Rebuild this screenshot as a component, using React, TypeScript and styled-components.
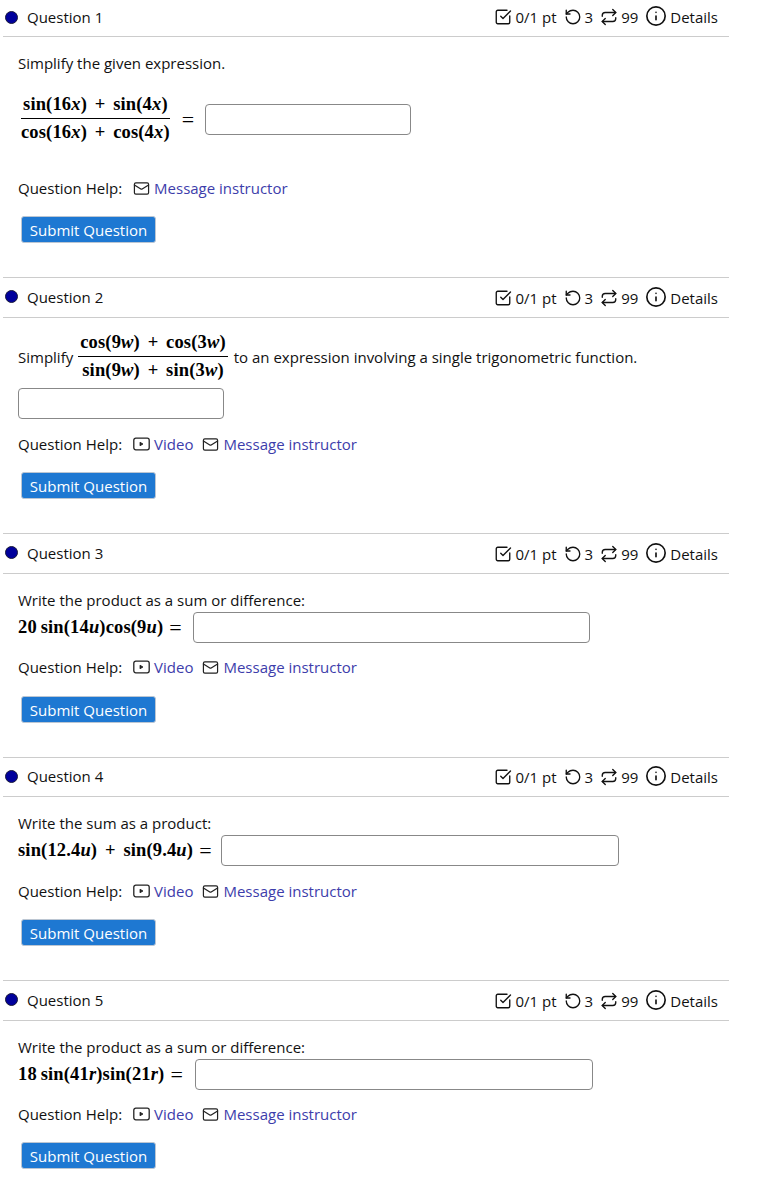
import * as React from 'react';
import styled, { createGlobalStyle } from 'styled-components';
import { Info, Mail, Repeat, RotateCcw, SquareCheckBig } from 'lucide-react';

const GlobalStyle = createGlobalStyle`
  html, body {
    margin: 0;
    padding: 0;
    background: #fff;
  }
  body {
    font-family: "Open Sans", "Liberation Sans", sans-serif;
    font-size: 15px;
    color: #111;
  }
`;

const Page = styled.div`
  width: 726px;
  margin-left: 3px;
`;

const Question = styled.section<{ $first?: boolean }>`
  border-top: ${(p) => (p.$first ? 'none' : '1px solid #ccc')};
`;

const Header = styled.header<{ $h: number }>`
  height: ${(p) => p.$h}px;
  box-sizing: content-box;
  border-bottom: 1px solid #ccc;
  display: flex;
  align-items: center;
  justify-content: space-between;
  padding-right: 11px;
`;

const Title = styled.div`
  display: flex;
  align-items: center;
  gap: 9px;
  font-size: 15px;
  margin-bottom: 2px;
`;

const Dot = styled.span`
  width: 13px;
  height: 13px;
  margin-left: 2px;
  border-radius: 50%;
  background: #00009c;
  border: 1px solid #1a1a3a;
  box-sizing: border-box;
`;

const Meta = styled.div<{ $first?: boolean }>`
  display: flex;
  align-items: center;
  font-size: 15px;
  gap: 7px;
  margin-top: ${(p) => (p.$first ? '-2px' : '0')};
`;

const MetaItem = styled.span`
  display: inline-flex;
  align-items: center;
  gap: 3px;
`;

const DetailsItem = styled(MetaItem)`
  svg {
    position: relative;
    top: -1px;
  }
`;

const Body = styled.div`
  padding-left: 15px;
`;

const Prompt = styled.div`
  line-height: 20px;
  white-space: nowrap;
`;

const MathRow = styled.div<{ $gap?: number }>`
  display: flex;
  align-items: center;
  margin-top: ${(p) => p.$gap ?? 0}px;
`;

const MathText = styled.span`
  font-family: "Liberation Serif", "DejaVu Serif", serif;
  font-weight: bold;
  font-size: 18.5px;
  letter-spacing: 0.15px;
  word-spacing: 3px;
  white-space: nowrap;
  color: #000;
`;

const Fraction = styled.span<{ $left: number; $right: number; $bottom?: number }>`
  display: inline-flex;
  flex-direction: column;
  align-items: center;
  line-height: 27px;
  margin: 0 ${(p) => p.$right}px ${(p) => p.$bottom ?? 0}px ${(p) => p.$left}px;
`;

const Numerator = styled(MathText)`
  display: block;
  padding: 0 2px;
  border-bottom: 1.5px solid #000;
`;

const Equals = styled(MathText)<{ $left: number; $right: number }>`
  font-weight: normal;
  font-size: 22px;
  margin: 0 ${(p) => p.$right}px 0 ${(p) => p.$left}px;
`;

const Answer = styled.input<{ $w: number }>`
  display: block;
  width: ${(p) => p.$w}px;
  height: 31px;
  box-sizing: border-box;
  border: 1px solid #888;
  border-radius: 4px;
  background: #fff;
  padding: 0;
  outline: none;
`;

const LooseAnswer = styled(Answer)`
  margin-top: 4px;
`;

const Help = styled.div<{ $gap: number }>`
  display: flex;
  align-items: center;
  height: 20px;
  font-size: 15px;
  margin-top: ${(p) => p.$gap}px;
`;

const HelpLabel = styled.span`
  margin-right: 11px;
`;

const HelpLink = styled.a`
  display: inline-flex;
  align-items: center;
  gap: 4px;
  margin-right: 9px;
  color: #3d3dab;
  text-decoration: none;

  svg {
    color: #222;
  }
`;

const Submit = styled.button<{ $gap: number }>`
  display: block;
  margin: ${(p) => p.$gap}px 0 0 3px;
  width: 135px;
  height: 27px;
  padding: 0;
  border: 1px solid #bcc6d2;
  border-radius: 3px;
  background: #1e78d2;
  color: #fff;
  font: inherit;
  font-size: 15px;
`;

const Content = styled.div<{ $top: number; $bottom: number }>`
  padding-top: ${(p) => p.$top}px;
  padding-bottom: ${(p) => p.$bottom}px;
`;

const VideoIcon = () => (
  <svg width="17" height="14" viewBox="0 0 17 14" fill="none" stroke="currentColor" strokeWidth="1.3">
    <rect x="0.8" y="1.2" width="15.4" height="11.6" rx="2" />
    <path d="M7 5.2v3.6l3-1.8z" fill="currentColor" strokeWidth="0.8" strokeLinejoin="round" />
  </svg>
);

const QuestionHead: React.FC<{ n: number; first?: boolean; h?: number }> = ({ n, first, h = 39 }) => (
  <Header $h={h}>
    <Title>
      <Dot />
      Question {n}
    </Title>
    <Meta $first={first}>
      <MetaItem>
        <SquareCheckBig size={18} strokeWidth={1.8} />
        0/1 pt
      </MetaItem>
      <MetaItem>
        <RotateCcw size={18} strokeWidth={1.8} />3
      </MetaItem>
      <MetaItem>
        <Repeat size={18} strokeWidth={1.8} />
        99
      </MetaItem>
      <DetailsItem>
        <Info size={22} strokeWidth={1.8} />
        Details
      </DetailsItem>
    </Meta>
  </Header>
);

const QuestionHelp: React.FC<{ video?: boolean; gap: number }> = ({ video, gap }) => (
  <Help $gap={gap}>
    <HelpLabel>Question Help:</HelpLabel>
    {video && (
      <HelpLink href="#">
        <VideoIcon />
        Video
      </HelpLink>
    )}
    <HelpLink href="#">
      <Mail size={17} strokeWidth={1.7} />
      Message instructor
    </HelpLink>
  </Help>
);

const products = [
  {
    n: 3,
    prompt: 'Write the product as a sum or difference:',
    math: (
      <>
        20{'\u2009'}sin(14<i>u</i>)cos(9<i>u</i>)
      </>
    ),
    w: 397,
    h: 39,
    eqRight: 11,
    helpGap: 14,
    buttonGap: 19,
  },
  {
    n: 4,
    prompt: 'Write the sum as a product:',
    math: (
      <>
        sin(12.4<i>u</i>) + sin(9.4<i>u</i>)
      </>
    ),
    w: 398,
    h: 38,
    eqRight: 9,
    helpGap: 15,
    buttonGap: 18,
  },
  {
    n: 5,
    prompt: 'Write the product as a sum or difference:',
    math: (
      <>
        18{'\u2009'}sin(41<i>r</i>)sin(21<i>r</i>)
      </>
    ),
    w: 398,
    h: 39,
    eqRight: 12,
    helpGap: 14,
    buttonGap: 18,
  },
];

export default function App() {
  return (
    <Page>
      <GlobalStyle />
      <Question $first>
        <QuestionHead n={1} first h={36} />
        <Body>
          <Content $top={16} $bottom={34}>
            <Prompt>Simplify the given expression.</Prompt>
            <MathRow $gap={18}>
              <Fraction $left={3} $right={12} $bottom={2}>
                <Numerator>
                  sin(16<i>x</i>) + sin(4<i>x</i>)
                </Numerator>
                <MathText>
                  cos(16<i>x</i>) + cos(4<i>x</i>)
                </MathText>
              </Fraction>
              <Equals $left={0} $right={11}>=</Equals>
              <Answer $w={206} />
            </MathRow>
            <QuestionHelp gap={30} />
            <Submit $gap={18}>Submit Question</Submit>
          </Content>
        </Body>
      </Question>
      <Question>
        <QuestionHead n={2} />
        <Body>
          <Content $top={11} $bottom={34}>
            <MathRow>
              <Prompt>Simplify</Prompt>
              <Fraction $left={5} $right={6}>
                <Numerator>
                  cos(9<i>w</i>) + cos(3<i>w</i>)
                </Numerator>
                <MathText>
                  sin(9<i>w</i>) + sin(3<i>w</i>)
                </MathText>
              </Fraction>
              <Prompt>to an expression involving a single trigonometric function.</Prompt>
            </MathRow>
            <LooseAnswer $w={206} />
            <QuestionHelp video gap={15} />
            <Submit $gap={18}>Submit Question</Submit>
          </Content>
        </Body>
      </Question>
      {products.map((q) => (
        <Question key={q.n}>
          <QuestionHead n={q.n} h={q.h} />
          <Body>
            <Content $top={16} $bottom={34}>
              <Prompt>{q.prompt}</Prompt>
              <MathRow $gap={2}>
                <MathText>{q.math}</MathText>
                <Equals $left={6} $right={q.eqRight}>=</Equals>
                <Answer $w={q.w} />
              </MathRow>
              <QuestionHelp video gap={q.helpGap} />
              <Submit $gap={q.buttonGap}>Submit Question</Submit>
            </Content>
          </Body>
        </Question>
      ))}
    </Page>
  );
}
